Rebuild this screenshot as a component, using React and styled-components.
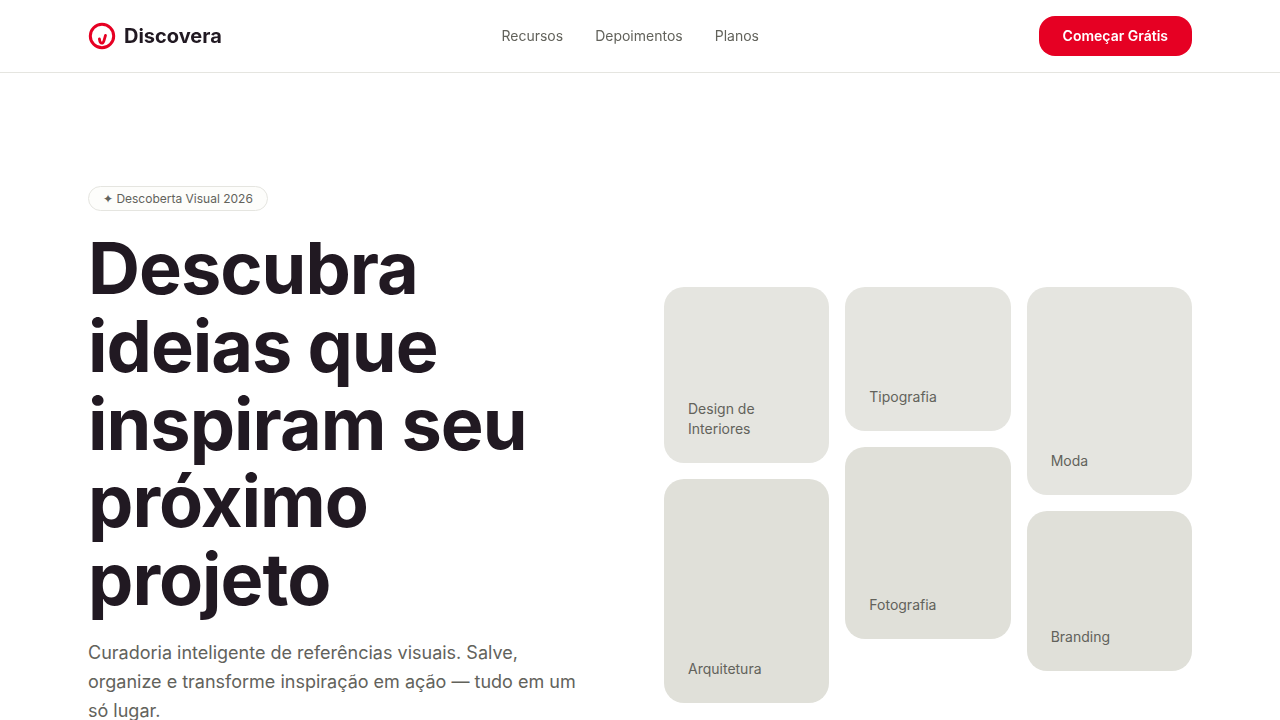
import styled, { createGlobalStyle } from "styled-components";

const GlobalStyle = createGlobalStyle`
    * {
        box-sizing: border-box;
    }

    body {
        margin: 0;
        background: #fff;
        color: #211922;
        font-family: Inter, "Liberation Sans", sans-serif;
    }
`;

const Header = styled.header`
    position: sticky;
    top: 0;
    z-index: 10;
    background: rgba(255, 255, 255, 0.95);
    backdrop-filter: blur(12px);
    border-bottom: 1px solid #e5e5e0;
`;

const HeaderInner = styled.div`
    display: flex;
    align-items: center;
    justify-content: space-between;
    max-width: 1200px;
    margin: 0 auto;
    padding: 16px 48px;
`;

const Brand = styled.a`
    display: flex;
    align-items: center;
    gap: 8px;
    color: #211922;
    font-size: 20px;
    font-weight: 700;
    line-height: 24px;
    text-decoration: none;
`;

const Nav = styled.nav`
    display: flex;
    gap: 32px;
`;

const NavLink = styled.a`
    color: #62625b;
    font-size: 14px;
    line-height: 20px;
    text-decoration: none;

    &:hover {
        color: #211922;
    }
`;

const StartButton = styled.button`
    padding: 10px 24px;
    background: #e60023;
    color: #fff;
    border: none;
    border-radius: 16px;
    cursor: pointer;
    font-family: inherit;
    font-size: 14px;
    font-weight: 600;
    line-height: 20px;

    &:hover {
        background: #cc001f;
    }
`;

const Hero = styled.main`
    display: grid;
    grid-template-columns: 1fr 1fr;
    align-items: center;
    gap: 48px;
    max-width: 1200px;
    margin: 0 auto;
    padding: 113px 48px 80px;
`;

const HeroCopy = styled.section`
    display: flex;
    flex-direction: column;
    align-items: flex-start;
    padding-bottom: 80px;
`;

const Badge = styled.span`
    padding: 4px 14px;
    background: #fdfdfb;
    border: 1px solid #e5e5e0;
    border-radius: 16px;
    color: #62625b;
    font-size: 12px;
    line-height: 15px;
`;

const Title = styled.h1`
    margin: 18px 0 20px;
    font-size: 72px;
    font-weight: 700;
    line-height: 1.08;
    letter-spacing: -1px;
`;

const Lead = styled.p`
    max-width: 500px;
    margin: 0;
    color: #62625b;
    font-size: 18px;
    line-height: 29px;
`;

const Gallery = styled.section`
    display: grid;
    grid-template-columns: repeat(3, 1fr);
    align-items: start;
    gap: 16px;
`;

const Column = styled.div`
    display: grid;
    gap: 16px;
`;

const Tile = styled.article`
    display: flex;
    align-items: flex-end;
    height: ${({ $height }) => $height}px;
    padding: 24px;
    background: ${({ $dark }) => ($dark ? "#e0e0d9" : "#e5e5e0")};
    border-radius: 20px;
    color: #62625b;
    font-size: 14px;
    line-height: 20px;
`;

const columns = [
    [
        { label: "Design de Interiores", height: 176 },
        { label: "Arquitetura", height: 224 },
    ],
    [
        { label: "Tipografia", height: 144 },
        { label: "Fotografia", height: 192 },
    ],
    [
        { label: "Moda", height: 208 },
        { label: "Branding", height: 160 },
    ],
];

function Logo() {
    return (
        <svg width="28" height="28" viewBox="0 0 28 28" fill="none" stroke="#e60023" aria-hidden="true">
            <circle cx="14" cy="14" r="11.7" strokeWidth="3" />
            <path
                d="M11.4 17c.4 2.800 1.200 4.200 2.400 4.200s1.700-.9 2.200-2.600l1.500-5.200"
                strokeWidth="2.8"
                strokeLinecap="round"
            />
        </svg>
    );
}

export default function App() {
    return (
        <>
            <GlobalStyle />
            <Header>
                <HeaderInner>
                    <Brand href="#">
                        <Logo />
                        Discovera
                    </Brand>
                    <Nav>
                        <NavLink href="#recursos">Recursos</NavLink>
                        <NavLink href="#depoimentos">Depoimentos</NavLink>
                        <NavLink href="#planos">Planos</NavLink>
                    </Nav>
                    <StartButton type="button">Começar Grátis</StartButton>
                </HeaderInner>
            </Header>
            <Hero>
                <HeroCopy>
                    <Badge>✦ Descoberta Visual 2026</Badge>
                    <Title>Descubra ideias que inspiram seu próximo projeto</Title>
                    <Lead>
                        Curadoria inteligente de referências visuais. Salve, organize e
                        transforme inspiração em ação — tudo em um só lugar.
                    </Lead>
                </HeroCopy>
                <Gallery>
                    {columns.map((tiles, index) => (
                        <Column key={index}>
                            {tiles.map(({ label, height }, row) => (
                                <Tile key={label} $height={height} $dark={row === 1}>
                                    {label}
                                </Tile>
                            ))}
                        </Column>
                    ))}
                </Gallery>
            </Hero>
        </>
    );
}
